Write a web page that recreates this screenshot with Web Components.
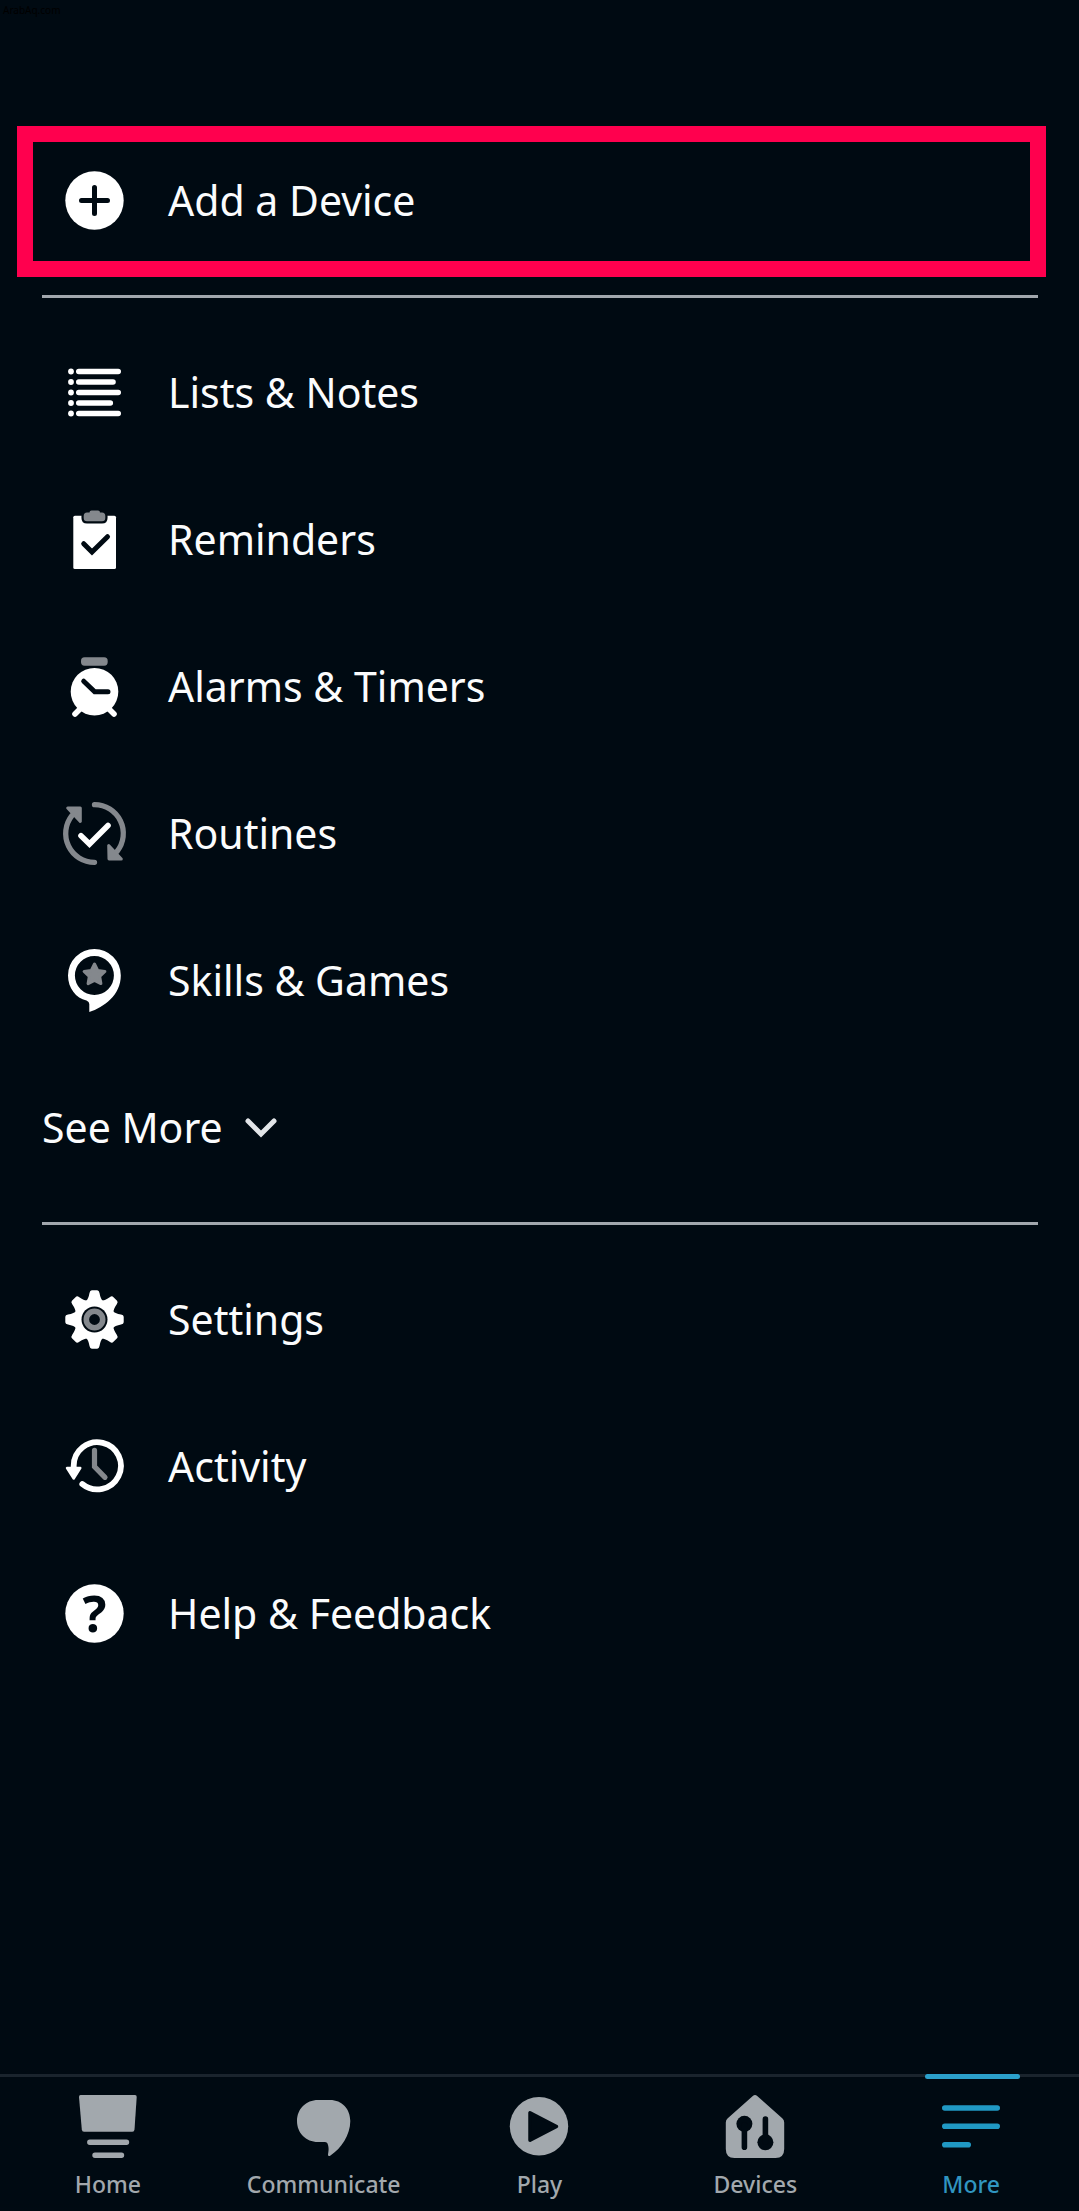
<!DOCTYPE html>
<html lang="en">
<head>
<meta charset="utf-8">
<meta name="viewport" content="width=device-width, initial-scale=1">
<title>More</title>
<style>
  html, body { margin: 0; background: #000a12; }
  body { font-family: "Noto Sans", "Open Sans", sans-serif; color: #fbfcfd; }
</style>
</head>
<body>
<alexa-screen>
  <site-mark slot="mark">ArabAq.com</site-mark>
  <menu-group>
    <menu-item icon="add" highlighted>Add a Device</menu-item>
  </menu-group>
  <menu-group>
    <menu-item icon="lists">Lists &amp; Notes</menu-item>
    <menu-item icon="reminders">Reminders</menu-item>
    <menu-item icon="alarms">Alarms &amp; Timers</menu-item>
    <menu-item icon="routines">Routines</menu-item>
    <menu-item icon="skills">Skills &amp; Games</menu-item>
    <see-more>See More</see-more>
  </menu-group>
  <menu-group>
    <menu-item icon="settings">Settings</menu-item>
    <menu-item icon="activity">Activity</menu-item>
    <menu-item icon="help">Help &amp; Feedback</menu-item>
  </menu-group>
  <tab-bar slot="tabs">
    <tab-item icon="home">Home</tab-item>
    <tab-item icon="communicate">Communicate</tab-item>
    <tab-item icon="play">Play</tab-item>
    <tab-item icon="devices">Devices</tab-item>
    <tab-item icon="more" active>More</tab-item>
  </tab-bar>
</alexa-screen>

<script>
const DARK = '#000a12';
const GREY = '#84888d';
const tooth = a => `<path transform="rotate(${a} 31.5 31.5)" d="M22.5 14 Q25.500 11 26.500 5 Q27 2.300 28.800 2.300 H34.200 Q36 2.300 36.500 5 Q37.500 11 40.500 14Z"/>`;

const menuIcons = {
  add: `<circle cx="31.5" cy="31.5" r="29.2" fill="#fff"/>
    <path d="M18.500 31.5H44.500M31.5 18.500V44.500" stroke="${DARK}" stroke-width="5" stroke-linecap="round"/>`,
  lists: `<g fill="#fff"><circle cx="8" cy="10.5" r="2.900"/><circle cx="8" cy="21" r="2.900"/><circle cx="8" cy="31.500" r="2.900"/><circle cx="8" cy="42" r="2.900"/><circle cx="8" cy="52.500" r="2.900"/></g>
    <path d="M15.800 10.500H55.200M15.800 21H50M15.800 31.500H55.200M15.800 42H47.300M15.800 52.500H55.200" stroke="#fff" stroke-width="5.600" stroke-linecap="round"/>`,
  reminders: `<rect x="10.300" y="7.700" width="42.700" height="53.300" rx="1.600" fill="#fff"/>
    <path d="M26.500 4.500Q26.500 2.500 28.500 2.500H35Q37 2.500 37 4.500H39Q42.300 4.500 42.300 8V10Q42.300 13.300 39 13.300H24Q20.700 13.300 20.700 10V8Q20.700 4.500 24 4.500Z" fill="${GREY}" stroke="${DARK}" stroke-width="4.500" paint-order="stroke"/>
    <path d="M20.700 35.700L29 44L44.500 28.700" fill="none" stroke="${DARK}" stroke-width="5" stroke-linecap="round"/>`,
  alarms: `<rect x="18" y="2.300" width="26.700" height="8.400" rx="3.600" fill="${GREY}"/>
    <path d="M12 59L20 51M51 59L43 51" stroke="#fff" stroke-width="5.600" stroke-linecap="round"/>
    <circle cx="31.500" cy="36.700" r="23.800" fill="#fff"/>
    <path d="M20.700 26.200L31.700 36.700H45" fill="none" stroke="${DARK}" stroke-width="5" stroke-linecap="round"/>`,
  routines: `<g fill="none" stroke="${GREY}" stroke-width="5.300" stroke-linecap="round">
      <path d="M31.500 2.700A28.800 28.800 0 0 1 54 49.500"/>
      <path d="M31.500 60.300A28.800 28.800 0 0 1 9 13.500"/></g>
    <path d="M45.700 43.500L46 57H58.300ZM17.300 19.500V6H4.700Z" fill="${GREY}" stroke="${GREY}" stroke-width="3" stroke-linejoin="round"/>
    <path d="M18 33.700L26.500 42L45 23.500" fill="none" stroke="#fff" stroke-width="5.600" stroke-linecap="round"/>`,
  skills: `<path fill="#fff" fill-rule="evenodd" d="M31.400 0A26.400 26.400 0 0 0 5 26.400C5 39 13 49 23.500 51.500Q26.300 52.500 26.300 55V63C41 58 57.800 46 57.800 26.400A26.400 26.400 0 0 0 31.400 0ZM31.400 7A19.500 19.500 0 1 1 31.400 46A19.500 19.500 0 1 1 31.400 7Z"/>
    <path d="M31.500 15L34.700 21.400L41.900 22.500L36.700 27.500L37.900 34.600L31.500 31.300L25.100 34.600L26.300 27.500L21.100 22.500L28.300 21.400Z" fill="${GREY}" stroke="${GREY}" stroke-width="3" stroke-linejoin="round"/>`,
  settings: `<g fill="#fff"><circle cx="31.500" cy="31.500" r="20.500"/>${[0,45,90,135,180,225,270,315].map(tooth).join('')}</g>
    <circle cx="31.500" cy="31.500" r="13" fill="${DARK}"/>
    <circle cx="31.500" cy="31.500" r="8.200" fill="none" stroke="${GREY}" stroke-width="5.600"/>`,
  activity: `<path d="M10.700 33V30.700A23.600 23.600 0 1 1 19.300 49" fill="none" stroke="#fff" stroke-width="5.800" stroke-linecap="round"/>
    <path d="M4 33H17.300L10.700 43.500Z" fill="#fff" stroke="#fff" stroke-width="2.400" stroke-linejoin="round"/>
    <path d="M31.500 15.300V31.700L42 42.300" fill="none" stroke="${GREY}" stroke-width="5.200" stroke-linecap="round"/>`,
  help: `<circle cx="31.500" cy="31.500" r="29.200" fill="#fff"/>
    <text x="31.500" y="50" text-anchor="middle" font-size="50" font-weight="700" fill="${DARK}">?</text>`
};

const tabIcons = {
  home: `<path d="M4.500 0H59Q60.800 0 60.700 2L58.500 34.500Q58.300 36.700 56.300 36.700H8Q6 36.700 5.800 34.500L3 2Q3 0 4.500 0Z" fill="currentColor"/>
    <path d="M13.800 47.200H50.500M19 60.300H45.500" stroke="currentColor" stroke-width="5.400" stroke-linecap="round"/>`,
  communicate: `<path fill="currentColor" d="M26 5H38C50 5 58.300 14 58.300 26C58.300 40 49 53.500 38.500 60.500Q36 62 36 59.500C37.200 54 36.500 51 35.500 48.500Q35 47 33 47H26C14 47 5 38 5 26S14 5 26 5Z"/>`,
  play: `<circle cx="32" cy="31.300" r="29.200" fill="currentColor"/>
    <path d="M23 17.800V45.200L49.500 31.500Z" fill="${DARK}" stroke="${DARK}" stroke-width="3.500" stroke-linejoin="round"/>`,
  devices: `<path fill="currentColor" d="M29.800 1Q32 -1 34.200 1L59.500 23.500Q61.200 25 61.200 27.500V54Q61.200 63 52.500 63H11.500Q2.800 63 2.800 54V27.500Q2.800 25 4.500 23.500Z"/>
    <g fill="${DARK}"><circle cx="21.400" cy="28.800" r="8"/><circle cx="42.400" cy="47.300" r="8"/></g>
    <path d="M21.400 30V52.300M42.400 47V24" stroke="${DARK}" stroke-width="5.600" stroke-linecap="round"/>`,
  more: `<path d="M5.800 13H58.200M5.800 31.300H58.200M5.800 49.700H29.200" stroke="#2099c4" stroke-width="5.600" stroke-linecap="round"/>`
};

class Base extends HTMLElement {
  constructor() {
    super();
    this.attachShadow({ mode: 'open' });
  }
  connectedCallback() { this.shadowRoot.innerHTML = this.view(); }
}

customElements.define('alexa-screen', class extends Base {
  view() {
    return `<style>
      :host { display: flex; flex-direction: column; min-height: 100vh; }
      header { height: 127px; flex: none; }
      main { padding: 0 41px 0 42px; }
      footer { margin-top: auto; }
    </style>
    <header><slot name="mark"></slot></header>
    <main><slot></slot></main>
    <footer><slot name="tabs"></slot></footer>`;
  }
});

customElements.define('site-mark', class extends Base {
  view() {
    return `<style>
      :host { display: block; padding: 3px; font-size: 10px; line-height: 14px; color: #000; }
    </style><slot></slot>`;
  }
});

customElements.define('menu-group', class extends Base {
  view() {
    return `<style>
      :host { display: flex; flex-direction: column; }
      :host(:not(:first-of-type)) { margin-top: 21px; border-top: 3px solid #a1a7ad; padding-top: 21px; }
    </style><slot></slot>`;
  }
});

customElements.define('menu-item', class extends Base {
  view() {
    return `<style>
      :host { display: block; position: relative; }
      :host([highlighted])::after {
        content: ""; position: absolute; inset: -1px -8px -3px -25px;
        border: 16px solid #ff004e; pointer-events: none;
      }
      a { display: flex; align-items: center; gap: 42px; height: 147px; padding-left: 21px;
        font-size: 41px; line-height: 56px; color: inherit; text-decoration: none; }
      svg { width: 63px; height: 63px; flex: none; overflow: visible; }
      span { padding-bottom: 2px; }
    </style>
    <a href="#${this.getAttribute('icon')}">
      <svg viewBox="0 0 63 63" aria-hidden="true">${menuIcons[this.getAttribute('icon')]}</svg>
      <span><slot></slot></span>
    </a>`;
  }
});

customElements.define('see-more', class extends Base {
  view() {
    return `<style>
      :host { display: block; }
      button { display: flex; align-items: center; gap: 22px; width: 100%; height: 147px; padding: 0;
        border: 0; background: none; font: inherit; font-size: 41px; line-height: 56px; color: inherit; text-align: left; }
      svg { width: 32px; height: 21px; flex: none; }
      span { padding-bottom: 2px; }
    </style>
    <button type="button" aria-expanded="false">
      <span><slot></slot></span>
      <svg viewBox="0 0 32 21" aria-hidden="true"><path d="M3 4L16 17L29 4" fill="none" stroke="#e2e5e8" stroke-width="5" stroke-linecap="round"/></svg>
    </button>`;
  }
});

customElements.define('tab-bar', class extends Base {
  view() {
    return `<style>
      :host { display: block; }
      nav { display: flex; border-top: 3px solid #1a242d; }
    </style><nav aria-label="Main"><slot></slot></nav>`;
  }
});

customElements.define('tab-item', class extends Base {
  view() {
    const active = this.hasAttribute('active');
    return `<style>
      :host { display: block; position: relative; flex: 1 1 0; min-width: 0; color: #a2a8ad; }
      :host([active]) { color: #3095c0; }
      :host([active])::before {
        content: ""; position: absolute; top: -3px; left: 50%; width: 95px; height: 5px;
        margin-left: -46px; border-radius: 3px; background: #2ba0cb;
      }
      a { display: flex; flex-direction: column; align-items: center; gap: 9px; padding: 18px 0 11px;
        font-size: 23px; font-weight: 500; line-height: 32px; color: inherit; text-decoration: none; }
      svg { width: 64px; height: 64px; overflow: visible; }
    </style>
    <a href="#${this.getAttribute('icon')}"${active ? ' aria-current="page"' : ''}>
      <svg viewBox="0 0 64 64" aria-hidden="true">${tabIcons[this.getAttribute('icon')]}</svg>
      <span><slot></slot></span>
    </a>`;
  }
});
</script>
</body>
</html>
